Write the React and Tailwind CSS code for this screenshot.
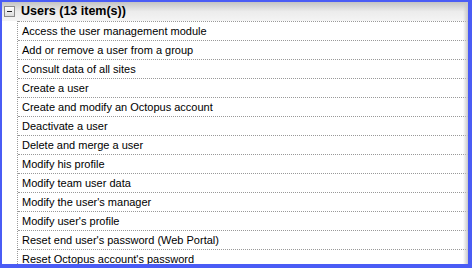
import React from 'react';

const items = [
  'Access the user management module',
  'Add or remove a user from a group',
  'Consult data of all sites',
  'Create a user',
  'Create and modify an Octopus account',
  'Deactivate a user',
  'Delete and merge a user',
  'Modify his profile',
  'Modify team user data',
  "Modify the user's manager",
  "Modify user's profile",
  "Reset end user's password (Web Portal)",
  "Reset Octopus account's password",
];

const App = () => {
  return (
    <div className="w-[472px] h-[268px] overflow-hidden bg-[#4a5cf5] pl-[2px] pt-[2px] pr-[4px] pb-[4px] font-['Liberation_Sans',Arial,sans-serif] text-[11px] text-black">
      <div className="relative h-full bg-white overflow-hidden">
        <div className="h-[19px] flex items-center bg-gradient-to-b from-[#c4c4c4] via-[#ececec] to-[#f4f4f4]">
          <div className="ml-[2px] w-[11px] h-[11px] border border-[#8a8a8a] bg-gradient-to-b from-white to-[#dcdcdc] flex items-center justify-center">
            <div className="w-[5px] h-px bg-[#222]" />
          </div>
          <span className="ml-[6px] font-bold text-[12.5px] leading-none">Users (13 item(s))</span>
        </div>
        <ul className="ml-[15px] border-l border-dotted border-[#999]">
          {items.map((item) => (
            <li key={item} className="h-[19px] flex items-center pl-[4px] border-t border-dotted border-[#999] leading-none whitespace-nowrap">
              {item}
            </li>
          ))}
        </ul>
        <div className="absolute top-0 right-0 bottom-0 w-[5px] bg-gradient-to-r from-transparent to-[#c8c8c8]" />
      </div>
    </div>
  );
};

export default App;
